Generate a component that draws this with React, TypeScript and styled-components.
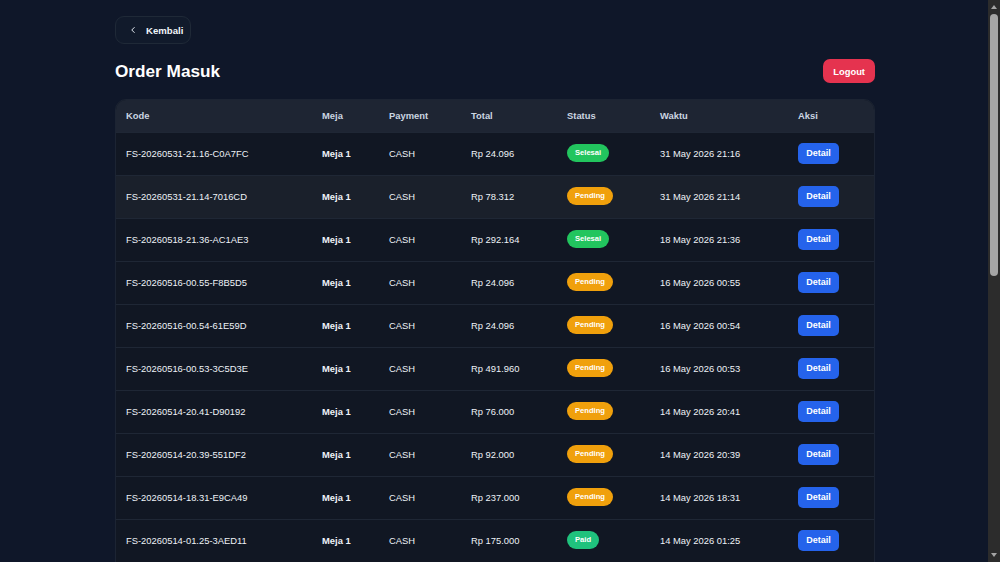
import React from 'react';
import styled, { createGlobalStyle } from 'styled-components';

const GlobalStyle = createGlobalStyle`
  html {
    background: #0f1729;
  }
  body {
    margin: 0;
    background: #0f1729;
    color: #e5e7eb;
    font-family: "Liberation Sans", Arial, sans-serif;
  }
  * {
    box-sizing: border-box;
  }
`;

const Viewport = styled.div`
  margin-right: 10px;
`;

const Page = styled.div`
  max-width: 760px;
  margin: 0 auto;
  padding: 16px 0 24px 0;
`;

// fake window scrollbar, drawn over the right edge
const ScrollTrack = styled.div`
  position: fixed;
  top: 0;
  right: 0;
  width: 12px;
  height: 100vh;
  background: #2c2c2c;
  display: flex;
  flex-direction: column;
  align-items: center;
  justify-content: space-between;
  padding: 3px 0;
`;

const ScrollThumb = styled.div`
  position: absolute;
  top: 14px;
  left: 2px;
  width: 8px;
  height: 262px;
  border-radius: 4px;
  background: #a5a5a5;
`;

const ScrollArrow = styled.div<{ $down?: boolean }>`
  width: 0;
  height: 0;
  border-left: 3.5px solid transparent;
  border-right: 3.5px solid transparent;
  ${(p) => (p.$down ? 'border-top: 4px solid #a5a5a5;' : 'border-bottom: 4px solid #a5a5a5;')}
  margin: 2px 0;
`;

const BackButton = styled.button`
  display: flex;
  align-items: center;
  gap: 8px;
  height: 28px;
  width: 76px;
  padding: 0 0 0 12px;
  background: #111a2b;
  border: 1px solid #1f2937;
  border-radius: 9px;
  color: #f1f5f9;
  font-family: inherit;
  font-size: 9.6px;
  font-weight: 700;
  cursor: pointer;
`;

const HeaderRow = styled.div`
  display: flex;
  align-items: center;
  justify-content: space-between;
  margin: 15px 0 16px 0;
`;

const Title = styled.h1`
  margin: 0;
  font-size: 17.2px;
  font-weight: 700;
  color: #ffffff;
`;

const LogoutButton = styled.button`
  height: 24px;
  padding: 0 10px;
  background: #e5334f;
  border: 0;
  border-radius: 7px;
  color: #fff;
  font-family: inherit;
  font-size: 9.4px;
  font-weight: 700;
  cursor: pointer;
`;

const TableCard = styled.div`
  border: 1px solid #1c2433;
  border-radius: 11px;
  overflow: hidden;
  background: #111723;
`;

const Table = styled.table`
  width: 100%;
  border-collapse: collapse;
  table-layout: fixed;
`;

const Th = styled.th<{ $w: number }>`
  width: ${(p) => p.$w}px;
  height: 32px;
  padding: 0 0 0 10px;
  text-align: left;
  font-size: 9.4px;
  font-weight: 700;
  color: #cbd5e1;
  background: #1e2533;
`;

const Tr = styled.tr<{ $hover?: boolean }>`
  background: ${(p) => (p.$hover ? '#1a202b' : '#111723')};
  border-top: 1px solid #1f2735;
`;

const Td = styled.td<{ $bold?: boolean }>`
  height: 43px;
  padding: 0 0 1px 10px;
  font-size: 9.4px;
  font-weight: ${(p) => (p.$bold ? 700 : 400)};
  color: #eef2f7;
  white-space: nowrap;
`;

const badgeColors: Record<string, string> = {
  Selesai: '#22c55e',
  Pending: '#f0a00c',
  Paid: '#1fc27d',
};

const Badge = styled.span<{ $status: string }>`
  display: inline-block;
  padding: 4px 8px;
  border-radius: 9px;
  background: ${(p) => badgeColors[p.$status]};
  color: #fff;
  font-size: 7.6px;
  font-weight: 700;
  line-height: 9.5px;
`;

const DetailButton = styled.button`
  height: 21px;
  width: 41px;
  padding: 0;
  background: #2563eb;
  border: 0;
  border-radius: 5px;
  color: #fff;
  font-family: inherit;
  font-size: 9px;
  font-weight: 700;
  cursor: pointer;
`;

type Order = {
  kode: string;
  total: string;
  status: string;
  waktu: string;
};

const orders: Order[] = [
  { kode: 'FS-20260531-21.16-C0A7FC', total: 'Rp 24.096', status: 'Selesai', waktu: '31 May 2026 21:16' },
  { kode: 'FS-20260531-21.14-7016CD', total: 'Rp 78.312', status: 'Pending', waktu: '31 May 2026 21:14' },
  { kode: 'FS-20260518-21.36-AC1AE3', total: 'Rp 292.164', status: 'Selesai', waktu: '18 May 2026 21:36' },
  { kode: 'FS-20260516-00.55-F8B5D5', total: 'Rp 24.096', status: 'Pending', waktu: '16 May 2026 00:55' },
  { kode: 'FS-20260516-00.54-61E59D', total: 'Rp 24.096', status: 'Pending', waktu: '16 May 2026 00:54' },
  { kode: 'FS-20260516-00.53-3C5D3E', total: 'Rp 491.960', status: 'Pending', waktu: '16 May 2026 00:53' },
  { kode: 'FS-20260514-20.41-D90192', total: 'Rp 76.000', status: 'Pending', waktu: '14 May 2026 20:41' },
  { kode: 'FS-20260514-20.39-551DF2', total: 'Rp 92.000', status: 'Pending', waktu: '14 May 2026 20:39' },
  { kode: 'FS-20260514-18.31-E9CA49', total: 'Rp 237.000', status: 'Pending', waktu: '14 May 2026 18:31' },
  { kode: 'FS-20260514-01.25-3AED11', total: 'Rp 175.000', status: 'Paid', waktu: '14 May 2026 01:25' },
  { kode: 'FS-20260513-22.10-B41C07', total: 'Rp 58.000', status: 'Paid', waktu: '13 May 2026 22:10' },
  { kode: 'FS-20260513-21.47-7A2E90', total: 'Rp 132.000', status: 'Selesai', waktu: '13 May 2026 21:47' },
  { kode: 'FS-20260513-19.05-5C8D14', total: 'Rp 64.000', status: 'Selesai', waktu: '13 May 2026 19:05' },
  { kode: 'FS-20260512-20.33-E06F2B', total: 'Rp 210.000', status: 'Paid', waktu: '12 May 2026 20:33' },
  { kode: 'FS-20260512-18.12-9B3A61', total: 'Rp 47.000', status: 'Selesai', waktu: '12 May 2026 18:12' },
  { kode: 'FS-20260511-21.58-D2C4F7', total: 'Rp 88.000', status: 'Selesai', waktu: '11 May 2026 21:58' },
  { kode: 'FS-20260511-13.20-41AE8C', total: 'Rp 156.000', status: 'Selesai', waktu: '11 May 2026 13:20' },
  { kode: 'FS-20260510-20.04-6F17B3', total: 'Rp 72.000', status: 'Selesai', waktu: '10 May 2026 20:04' },
  { kode: 'FS-20260510-12.45-C93D50', total: 'Rp 39.000', status: 'Selesai', waktu: '10 May 2026 12:45' },
  { kode: 'FS-20260509-19.26-0E8B2A', total: 'Rp 118.000', status: 'Selesai', waktu: '09 May 2026 19:26' },
  { kode: 'FS-20260509-11.03-A57C19', total: 'Rp 66.000', status: 'Selesai', waktu: '09 May 2026 11:03' },
  { kode: 'FS-20260508-20.17-3D9E44', total: 'Rp 94.000', status: 'Selesai', waktu: '08 May 2026 20:17' },
];

const columns = [
  { label: 'Kode', w: 196 },
  { label: 'Meja', w: 67 },
  { label: 'Payment', w: 82 },
  { label: 'Total', w: 96 },
  { label: 'Status', w: 93 },
  { label: 'Waktu', w: 138 },
  { label: 'Aksi', w: 86 },
];

export default function App() {
  return (
    <>
      <GlobalStyle />
      <Viewport>
        <Page>
          <BackButton>
            <svg width="10" height="10" viewBox="0 0 24 24" fill="none" stroke="#e2e8f0" strokeWidth="2.4" strokeLinecap="round" strokeLinejoin="round">
              <path d="M15 18l-6-6 6-6" />
            </svg>
            Kembali
          </BackButton>
          <HeaderRow>
            <Title>Order Masuk</Title>
            <LogoutButton>Logout</LogoutButton>
          </HeaderRow>
          <TableCard>
            <Table>
              <thead>
                <tr>
                  {columns.map((c) => (
                    <Th key={c.label} $w={c.w}>{c.label}</Th>
                  ))}
                </tr>
              </thead>
              <tbody>
                {orders.map((o, i) => (
                  <Tr key={o.kode} $hover={i === 1}>
                    <Td>{o.kode}</Td>
                    <Td $bold>Meja 1</Td>
                    <Td>CASH</Td>
                    <Td>{o.total}</Td>
                    <Td>
                      <Badge $status={o.status}>{o.status}</Badge>
                    </Td>
                    <Td>{o.waktu}</Td>
                    <Td>
                      <DetailButton>Detail</DetailButton>
                    </Td>
                  </Tr>
                ))}
              </tbody>
            </Table>
          </TableCard>
        </Page>
      </Viewport>
      <ScrollTrack>
        <ScrollArrow />
        <ScrollThumb />
        <ScrollArrow $down />
      </ScrollTrack>
    </>
  );
}
